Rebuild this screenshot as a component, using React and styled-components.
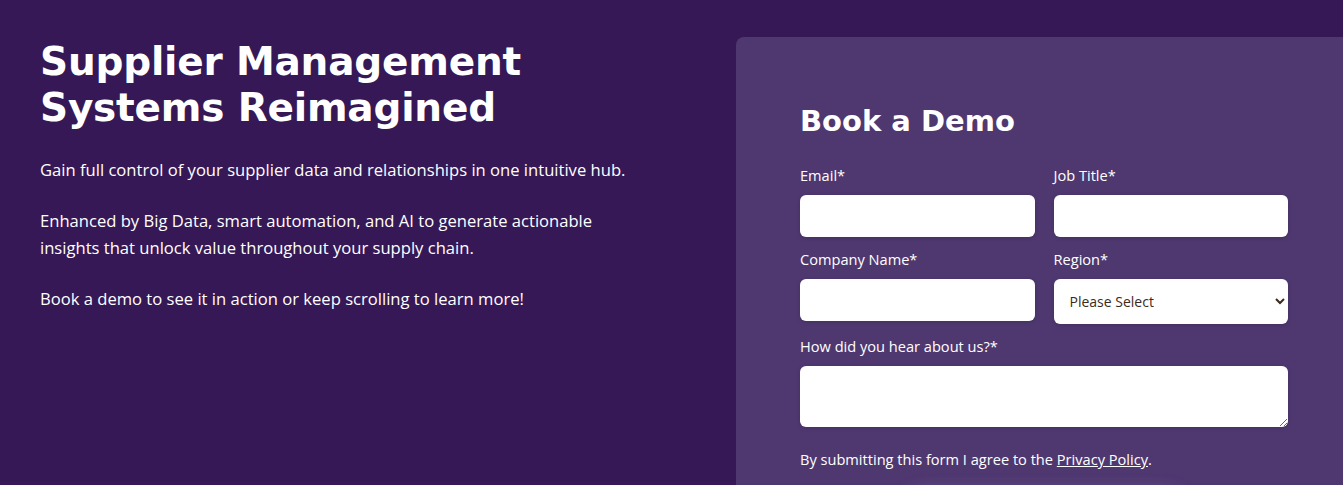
import React from "react";
import styled, { createGlobalStyle } from "styled-components";

const GlobalStyle = createGlobalStyle`
  body {
    margin: 0;
    background: #351855;
    overflow: hidden;
    font-family: "Open Sans", "Liberation Sans", Arial, sans-serif;
    color: #ffffff;
  }
`;

const Hero = styled.section`
  display: flex;
  align-items: flex-start;
  width: 1352px;
  height: 485px;
  overflow: hidden;
`;

const Intro = styled.div`
  flex: 0 0 656px;
  padding: 39px 40px 0 40px;
`;

const Headline = styled.h1`
  margin: 0 0 25px;
  font-family: "DejaVu Sans", sans-serif;
  font-weight: 700;
  font-size: 39px;
  line-height: 46px;
  letter-spacing: -0.2px;
`;

const Copy = styled.p`
  margin: 0 0 24px;
  font-size: 16.6px;
  font-weight: 500;
  line-height: 27px;
  max-width: 600px;
`;

const Card = styled.div`
  flex: 0 0 616px;
  margin-top: 37px;
  min-height: 540px;
  background: #4f3870;
  border-radius: 8px 0 0 0;
  padding: 62px 64px 0 64px;
  box-sizing: border-box;
`;

const CardTitle = styled.h2`
  margin: 0 0 22px;
  font-family: "DejaVu Sans", sans-serif;
  font-weight: 700;
  font-size: 29px;
  line-height: 44px;
`;

const Row = styled.div`
  display: grid;
  grid-template-columns: ${(p) => (p.$full ? "1fr" : "1fr 1fr")};
  column-gap: 19px;
  margin-bottom: 12px;
`;

const Field = styled.label`
  display: flex;
  flex-direction: column;
  font-size: 14.6px;
  font-weight: 500;
  line-height: 20px;
`;

const LabelText = styled.span`
  margin-bottom: 10px;
`;

const Input = styled.input`
  height: 42px;
  border: none;
  border-radius: 6px;
  background: #ffffff;
  box-shadow: 0 1px 4px rgba(0, 0, 0, 0.18);
  box-sizing: border-box;
  padding: 0 14px;
  font-size: 15px;
`;

const Select = styled.select`
  height: 45px;
  border: none;
  border-radius: 6px;
  background: #ffffff;
  box-shadow: 0 1px 4px rgba(0, 0, 0, 0.18);
  padding: 0 6px 0 12px;
  font-family: "Open Sans", "Liberation Sans", Arial, sans-serif;
  font-size: 14px;
  color: #3b2a1c;
`;

const TextArea = styled.textarea`
  height: 61px;
  border: none;
  border-radius: 6px;
  background: #ffffff;
  box-shadow: 0 1px 4px rgba(0, 0, 0, 0.18);
  box-sizing: border-box;
  resize: vertical;
`;

const Disclaimer = styled.p`
  margin: 22px 0 0;
  font-size: 14.6px;
  font-weight: 500;
  line-height: 20px;

  a {
    color: #ffffff;
    text-decoration: underline;
  }
`;

const Submit = styled.button`
  display: block;
  margin: 28px auto 0;
  width: 262px;
  height: 46px;
  border: none;
  border-radius: 6px;
  background: #7a5fa0;
  box-shadow: 0 -2px 18px rgba(200, 180, 240, 0.55);
  color: #ffffff;
  font-size: 16px;
`;

export default function App() {
  return (
    <>
      <GlobalStyle />
      <Hero>
        <Intro>
          <Headline>
            Supplier Management
            <br />
            Systems Reimagined
          </Headline>
          <Copy>Gain full control of your supplier data and relationships in one intuitive hub.</Copy>
          <Copy>
            Enhanced by Big Data, smart automation, and AI to generate actionable insights that unlock
            value throughout your supply chain.
          </Copy>
          <Copy>Book a demo to see it in action or keep scrolling to learn more!</Copy>
        </Intro>
        <Card>
          <CardTitle>Book a Demo</CardTitle>
          <form onSubmit={(e) => e.preventDefault()}>
            <Row>
              <Field>
                <LabelText>Email*</LabelText>
                <Input type="email" />
              </Field>
              <Field>
                <LabelText>Job Title*</LabelText>
                <Input type="text" />
              </Field>
            </Row>
            <Row>
              <Field>
                <LabelText>Company Name*</LabelText>
                <Input type="text" />
              </Field>
              <Field>
                <LabelText>Region*</LabelText>
                <Select defaultValue="">
                  <option value="">Please Select</option>
                  <option>North America</option>
                  <option>Europe</option>
                  <option>Asia Pacific</option>
                </Select>
              </Field>
            </Row>
            <Row $full>
              <Field>
                <LabelText>How did you hear about us?*</LabelText>
                <TextArea />
              </Field>
            </Row>
            <Disclaimer>
              By submitting this form I agree to the <a href="#privacy">Privacy Policy</a>.
            </Disclaimer>
            <Submit type="submit">Submit</Submit>
          </form>
        </Card>
      </Hero>
    </>
  );
}
